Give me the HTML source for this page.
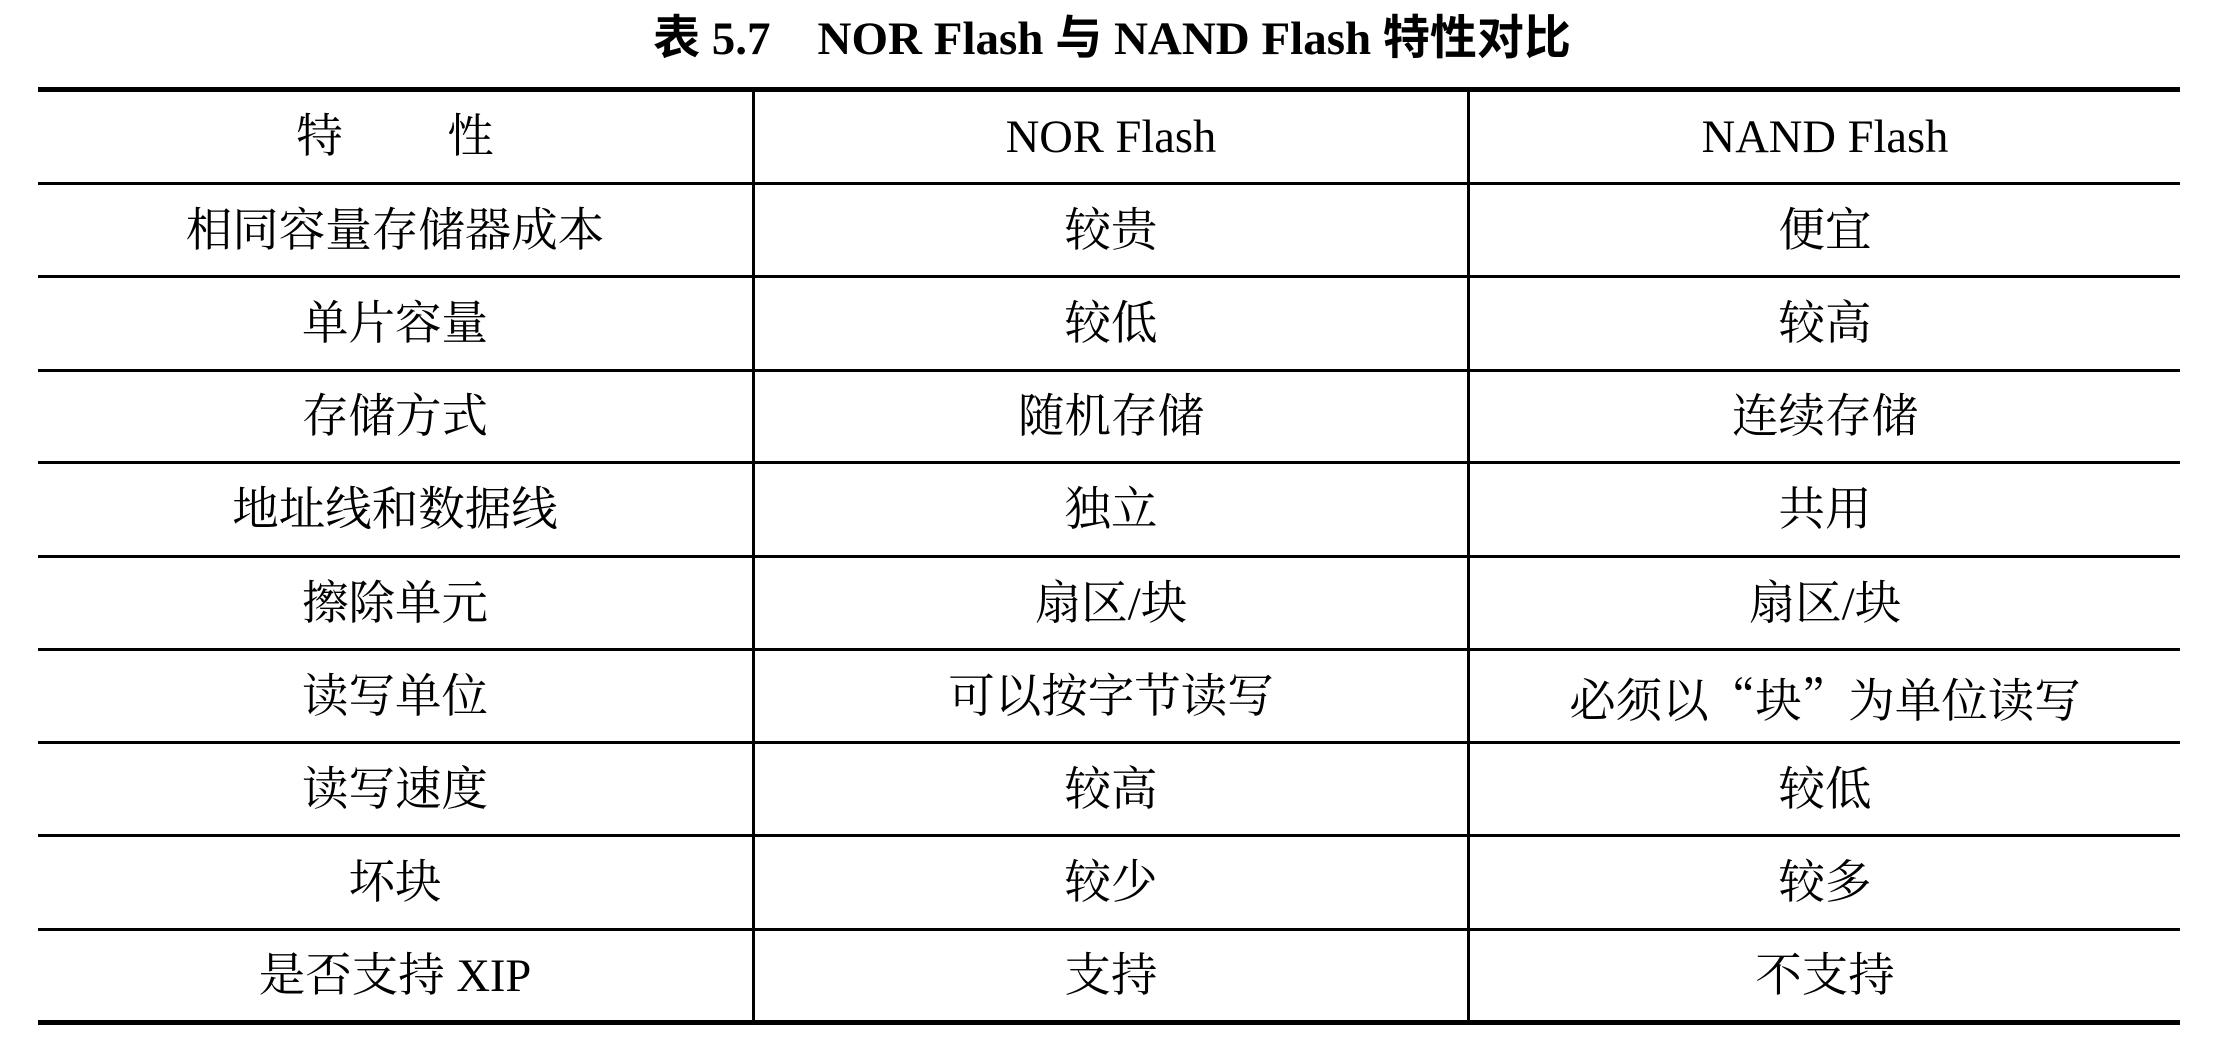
<!DOCTYPE html>
<html><head><meta charset="utf-8"><style>
html,body{margin:0;padding:0;background:#fff;}
body{width:2224px;height:1039px;position:relative;overflow:hidden;}
.t{position:absolute;left:0;width:2224px;top:12px;text-align:center;font-size:47px;font-weight:bold;font-family:"Liberation Serif","Noto Sans CJK SC",serif;line-height:54px;color:#000;}
.h{position:absolute;left:38px;width:2142px;background:#000;}
.v{position:absolute;width:3px;background:#000;top:91px;height:929px;}
.c{position:absolute;text-align:center;font-size:46.5px;font-family:"Liberation Serif","Noto Serif CJK SC",serif;line-height:54px;color:#000;white-space:nowrap;}
.q{font-family:"Noto Serif CJK SC",serif;}
</style></head><body>
<div class="t">表 5.7&nbsp;&nbsp;&nbsp;&nbsp;NOR Flash 与 NAND Flash 特性对比</div>
<div class="h" style="top:87px;height:5px"></div>
<div class="h" style="top:182px;height:3px"></div>
<div class="h" style="top:275px;height:3px"></div>
<div class="h" style="top:369px;height:3px"></div>
<div class="h" style="top:461px;height:3px"></div>
<div class="h" style="top:555px;height:3px"></div>
<div class="h" style="top:648px;height:3px"></div>
<div class="h" style="top:741px;height:3px"></div>
<div class="h" style="top:834px;height:3px"></div>
<div class="h" style="top:928px;height:3px"></div>
<div class="h" style="top:1020px;height:5px"></div>
<div class="v" style="left:752px"></div>
<div class="v" style="left:1467px"></div>
<div id="rows"></div>
<script>
var d=[["特&nbsp;&nbsp;&nbsp;&nbsp;&nbsp;&nbsp;&nbsp;&nbsp;&nbsp;性","NOR Flash","NAND Flash"],
["相同容量存储器成本","较贵","便宜"],["单片容量","较低","较高"],["存储方式","随机存储","连续存储"],
["地址线和数据线","独立","共用"],["擦除单元","扇区/块","扇区/块"],["读写单位","可以按字节读写","必须以<span class=\"q\">“</span>块<span class=\"q\">”</span>为单位读写"],
["读写速度","较高","较低"],["坏块","较少","较多"],["是否支持 XIP","支持","不支持"]];
var tops=[90,184,277,371,463,557,650,743,836,930],bots=[182,275,369,461,555,648,741,834,928,1020];
var xs=[[38,752],[755,1467],[1470,2180]],h="";
for(var i=0;i<d.length;i++){var cy=(tops[i]+bots[i])/2+2;for(var j=0;j<3;j++){h+='<div class="c" style="left:'+xs[j][0]+'px;width:'+(xs[j][1]-xs[j][0])+'px;top:'+(cy-27)+'px">'+d[i][j]+'</div>';}}
document.getElementById("rows").innerHTML=h;
</script>
</body></html>
